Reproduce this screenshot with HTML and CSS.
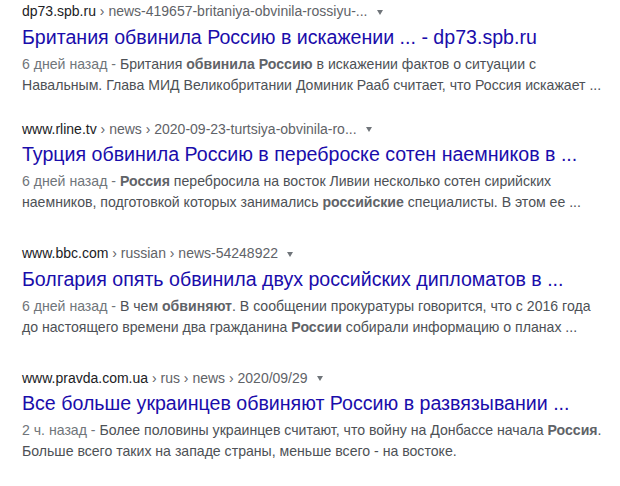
FILE: index.html
```html
<html>
<head>
  <title>Результаты поиска</title>
  <meta charset="utf-8">
  <link rel="stylesheet" href="styles.css">
</head>
<body>
  <div class="results">

    <div class="result">
      <div class="cite"><span class="host">dp73.spb.ru</span><span class="path"> › news-419657-britaniya-obvinila-rossiyu-...</span><span class="arrow"></span></div>
      <a class="title" href="#">Британия обвинила Россию в искажении ... - dp73.spb.ru</a>
      <div class="snippet"><span class="date">6 дней назад - </span>Британия <b>обвинила Россию</b> в искажении фактов о ситуации с Навальным. Глава МИД Великобритании Доминик Рааб считает, что Россия искажает ...</div>
    </div>

    <div class="result">
      <div class="cite"><span class="host">www.rline.tv</span><span class="path"> › news › 2020-09-23-turtsiya-obvinila-ro...</span><span class="arrow"></span></div>
      <a class="title" href="#">Турция обвинила Россию в переброске сотен наемников в ...</a>
      <div class="snippet"><span class="date">6 дней назад - </span><b>Россия</b> перебросила на восток Ливии несколько сотен сирийских наемников, подготовкой которых занимались <b>российские</b> специалисты. В этом ее ...</div>
    </div>

    <div class="result">
      <div class="cite"><span class="host">www.bbc.com</span><span class="path"> › russian › news-54248922</span><span class="arrow"></span></div>
      <a class="title" href="#">Болгария опять обвинила двух российских дипломатов в ...</a>
      <div class="snippet"><span class="date">6 дней назад - </span>В чем <b>обвиняют</b>. В сообщении прокуратуры говорится, что с 2016 года до настоящего времени два гражданина <b>России</b> собирали информацию о планах ...</div>
    </div>

    <div class="result">
      <div class="cite"><span class="host">www.pravda.com.ua</span><span class="path"> › rus › news › 2020/09/29</span><span class="arrow"></span></div>
      <a class="title" href="#">Все больше украинцев обвиняют Россию в развязывании ...</a>
      <div class="snippet"><span class="date">2 ч. назад - </span>Более половины украинцев считают, что войну на Донбассе начала <b>Россия</b>. Больше всего таких на западе страны, меньше всего - на востоке.</div>
    </div>

  </div>
</body>
</html>
```

FILE: styles.css
```css
body {
    margin: 0;
    background: #ffffff;
    font-family: "Liberation Sans", Arial, sans-serif;
}

.results {
    padding: 2px 0 0 22px;
    width: 586px;
}

.result {
    margin-bottom: 31px;
}

.result:first-child {
    margin-bottom: 24px;
}

.cite {
    font-size: 14px;
    line-height: 18px;
    color: #202124;
    white-space: nowrap;
}

.path {
    color: #5f6368;
}

.arrow {
    display: inline-block;
    margin-left: 9px;
    vertical-align: middle;
    border-left: 3.5px solid transparent;
    border-right: 3.5px solid transparent;
    border-top: 5px solid #70757a;
}

.title {
    display: block;
    margin-top: 3.5px;
    font-size: 19.6px;
    line-height: 26px;
    color: #1a0dab;
    text-decoration: none;
    white-space: nowrap;
}

.snippet {
    margin-top: 4px;
    font-size: 14.1px;
    line-height: 21px;
    color: #4d5156;
}

.snippet b {
    color: #5f6368;
}

.date {
    color: #70757a;
}
```
